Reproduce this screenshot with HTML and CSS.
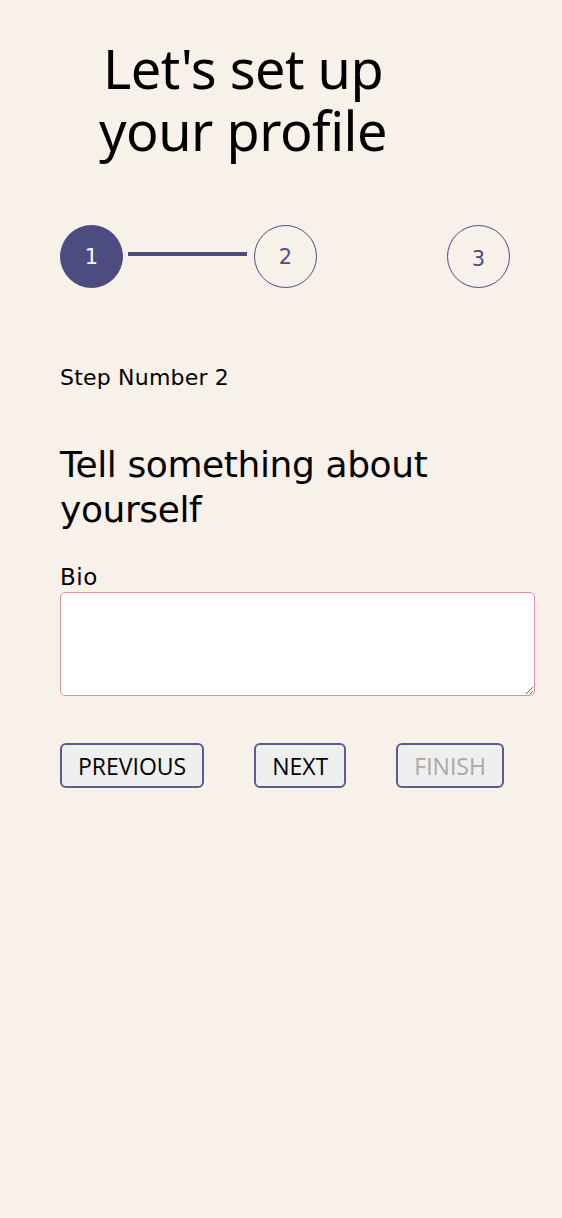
FILE: index.html
```html
<!DOCTYPE html>
<html lang="en">
<head>
<meta charset="utf-8">
<title>Profile setup</title>
<link rel="stylesheet" href="styles.css">
</head>
<body>
<main class="page">
  <h1 class="title">Let's set up your profile</h1>

  <div class="stepper">
    <div class="step">
      <span class="circle circle-active">1</span>
      <span class="connector connector-done"></span>
    </div>
    <div class="step">
      <span class="circle">2</span>
      <span class="connector"></span>
    </div>
    <div class="step">
      <span class="circle circle-three">3</span>
    </div>
  </div>

  <p class="step-label">Step Number 2</p>

  <h2 class="section-title">Tell something about yourself</h2>

  <form class="form">
    <label class="field-label" for="bio">Bio</label>
    <textarea id="bio" class="bio"></textarea>

    <div class="actions">
      <button type="button" class="btn">PREVIOUS</button>
      <button type="button" class="btn">NEXT</button>
      <button type="button" class="btn" disabled>FINISH</button>
    </div>
  </form>
</main>
</body>
</html>
```

FILE: styles.css
```css
* {
  box-sizing: border-box;
}

html, body {
  margin: 0;
  padding: 0;
  background: #f8f1e9;
}

body {
  font-family: "Open Sans", "Noto Sans", sans-serif;
  color: #000;
}

.page {
  padding: 37px 27px 0 60px;
}

.title {
  width: 366px;
  margin: 0;
  font-family: "Noto Sans", "Open Sans", sans-serif;
  font-weight: 400;
  font-size: 54px;
  line-height: 62px;
  text-align: center;
  letter-spacing: -0.5px;
}

.stepper {
  display: grid;
  grid-template-columns: 194px 193px 63px;
  margin-top: 64px;
}

.step {
  display: flex;
  align-items: center;
}

.circle {
  flex: 0 0 auto;
  width: 63px;
  height: 63px;
  border-radius: 50%;
  border: 1.5px solid #4d4c80;
  display: flex;
  align-items: center;
  justify-content: center;
  font-family: "DejaVu Sans", sans-serif;
  font-size: 21px;
  color: #4d4c80;
}

.circle-active {
  background: #4d4c80;
  color: #fff;
}

.circle-three {
  padding-top: 4px;
}

.connector {
  flex: 1;
  height: 4px;
  margin: 0 7px 6px 5px;
}

.connector-done {
  background: #4d4c80;
}

.step-label {
  margin: 76px 0 0;
  font-family: "DejaVu Sans", sans-serif;
  font-size: 22px;
  line-height: 28px;
  letter-spacing: 0.2px;
}

.section-title {
  width: 420px;
  margin: 50px 0 0;
  font-family: "DejaVu Sans", sans-serif;
  font-weight: 400;
  font-size: 36px;
  line-height: 45px;
  letter-spacing: -0.4px;
}

.form {
  display: flex;
  flex-direction: column;
  margin-top: 31px;
}

.field-label {
  font-family: "DejaVu Sans", sans-serif;
  font-size: 23px;
  line-height: 28px;
  letter-spacing: 0.5px;
}

.bio {
  display: block;
  width: 100%;
  height: 104px;
  margin-top: 1px;
  background: #fff;
  border: 1.5px solid #dd9597;
  border-radius: 5px;
  resize: vertical;
}

.actions {
  display: flex;
  gap: 50px;
  margin-top: 47px;
}

.btn {
  height: 45px;
  padding: 0 16px;
  background: #efefef;
  border: 2px solid #5d5c92;
  border-radius: 6px;
  font-family: "Open Sans", sans-serif;
  font-weight: 500;
  font-size: 23px;
  color: #000;
}

.btn:disabled {
  color: #aca8a4;
}
```
